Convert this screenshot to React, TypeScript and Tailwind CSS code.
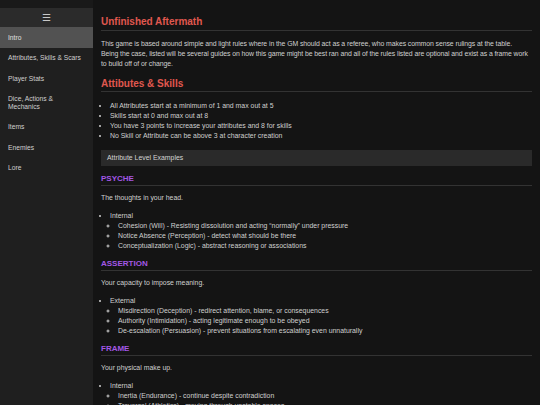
import React from 'react'

const navItems = [
    'Intro',
    'Attributes, Skills & Scars',
    'Player Stats',
    'Dice, Actions & Mechanics',
    'Items',
    'Enemies',
    'Lore',
]

type Group = { label: string; items: string[] }
type Section = { title: string; blurb: string; groups: Group[] }

const sections: Section[] = [
    {
        title: 'PSYCHE',
        blurb: 'The thoughts in your head.',
        groups: [{
            label: 'Internal',
            items: [
                'Cohesion (Will) - Resisting dissolution and acting \u201cnormally\u201d under pressure',
                'Notice Absence (Perception) - detect what should be there',
                'Conceptualization (Logic) - abstract reasoning or associations',
            ],
        }],
    },
    {
        title: 'ASSERTION',
        blurb: 'Your capacity to impose meaning.',
        groups: [{
            label: 'External',
            items: [
                'Misdirection (Deception) - redirect attention, blame, or consequences',
                'Authority (Intimidation) - acting legitimate enough to be obeyed',
                'De-escalation (Persuasion) - prevent situations from escalating even unnaturally',
            ],
        }],
    },
    {
        title: 'FRAME',
        blurb: 'Your physical make up.',
        groups: [{
            label: 'Internal',
            items: [
                'Inertia (Endurance) - continue despite contradiction',
                'Traversal (Athletics) - moving through unstable spaces',
            ],
        }],
    },
]

function Sidebar() {
    return (
        <aside className="w-[93px] shrink-0 bg-[#1f1f1f] text-[#cfcfcf]">
            <div className="h-[8px] bg-[#191919]"></div>
            <div className="h-[19px] bg-[#2b2b2b] flex items-center justify-center text-[10px] text-[#c8c8c8] leading-none">☰</div>
            {navItems.map((item, i) => (
                <div
                    key={item}
                    className={`px-[8px] py-[6.5px] text-[6.7px] leading-[7.5px] ${i === 0 ? 'bg-[#525252] text-[#e0e0e0]' : ''}`}
                >
                    {item}
                </div>
            ))}
        </aside>
    )
}

function SubHeading({ children }: { children: React.ReactNode }) {
    return (
        <h3 className="mt-[8px] pb-px border-b border-[#333] text-[8px] leading-[10px] font-bold text-[#a357e6]">
            {children}
        </h3>
    )
}

export default function App() {
    return (
        <div className="flex w-[540px] h-[405px] overflow-hidden bg-[#141414] antialiased font-['Liberation_Sans',Arial,sans-serif]">
            <Sidebar />
            <main className="flex-1 px-[8px] pt-[16px] text-[#d0d0d0] text-[6.9px] leading-[10px]">
                <h1 className="pb-[2px] border-b border-[#333] text-[10px] leading-[12px] font-bold text-[#e0584f]">
                    Unfinished Aftermath
                </h1>
                <p className="mt-[8px] tracking-[-0.08px]">
                    This game is based around simple and light rules where in the GM should act as a referee, who makes common sense rulings at the table.<br />
                    Being the case, listed will be several guides on how this game might be best ran and all of the rules listed are optional and exist as a frame work to build off of or change.
                </p>
                <h2 className="mt-[9px] pb-[1px] border-b border-[#333] text-[10px] leading-[12px] font-bold text-[#e0584f]">
                    Attibutes &amp; Skills
                </h2>
                <ul className="mt-[9px] pl-[9px] list-disc">
                    <li>All Attributes start at a minimum of 1 and max out at 5</li>
                    <li>Skills start at 0 and max out at 8</li>
                    <li>You have 3 points to increase your attributes and 8 for skills</li>
                    <li>No Skill or Attribute can be above 3 at character creation</li>
                </ul>
                <div className="mt-[9px] h-[16px] flex items-center px-[6px] bg-[#2a2a2a] text-[#d4d4d4]">
                    Attribute Level Examples
                </div>
                {sections.map(s => (
                    <section key={s.title}>
                        <SubHeading>{s.title}</SubHeading>
                        <p className="mt-[7px]">{s.blurb}</p>
                        {s.groups.map(g => (
                            <ul key={g.label} className="mt-[8px] pl-[9px] list-disc">
                                <li>
                                    {g.label}
                                    <ul className="pl-[8px] list-[circle]">
                                        {g.items.map(it => <li key={it}>{it}</li>)}
                                    </ul>
                                </li>
                            </ul>
                        ))}
                    </section>
                ))}
            </main>
        </div>
    )
}
